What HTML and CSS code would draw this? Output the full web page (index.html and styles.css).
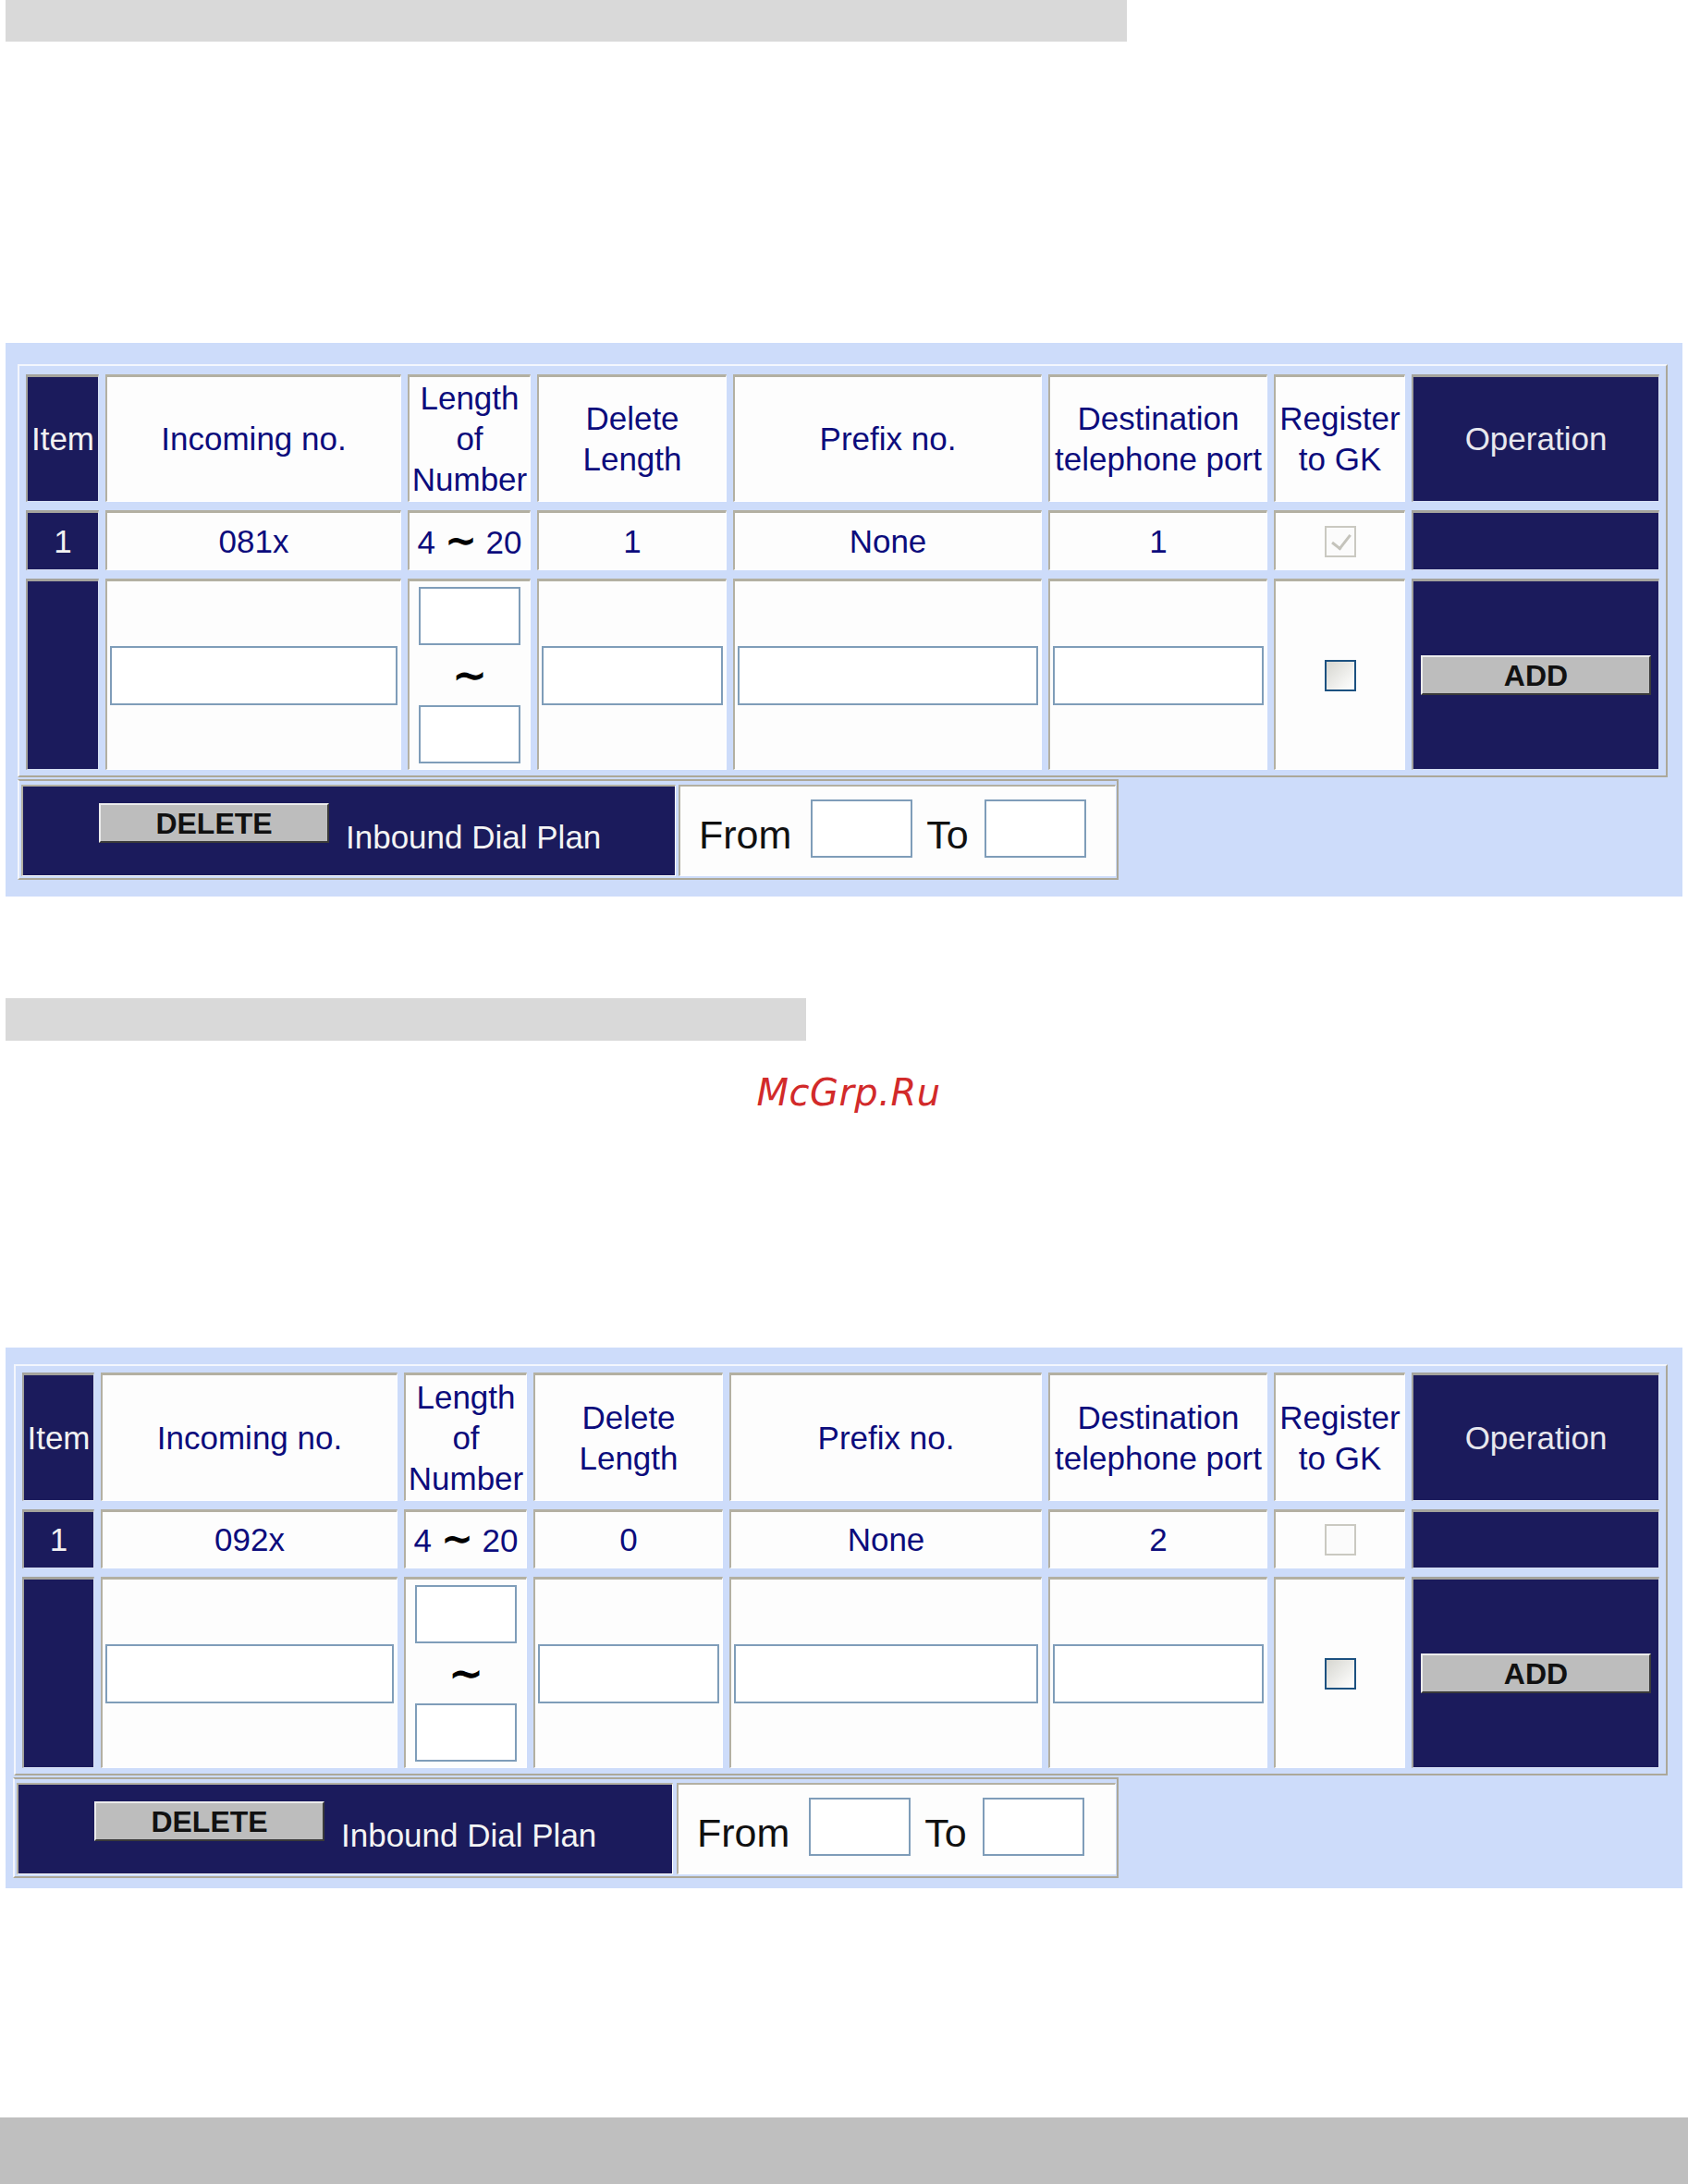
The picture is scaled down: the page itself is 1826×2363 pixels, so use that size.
FILE: index.html
```html
<!DOCTYPE html>
<html lang="en">
<head>
<meta charset="utf-8">
<title>Inbound Dial Plan</title>
<link rel="stylesheet" href="styles.css">
</head>
<body>
<div class="topbar"></div>

<section class="panel panel-1">
  <div class="grid grid-1">
    <div class="cell dark">Item</div>
    <div class="cell">Incoming no.</div>
    <div class="cell">Length<br>of<br>Number</div>
    <div class="cell">Delete<br>Length</div>
    <div class="cell">Prefix no.</div>
    <div class="cell">Destination<br>telephone port</div>
    <div class="cell">Register<br>to GK</div>
    <div class="cell dark op">Operation</div>

    <div class="cell dark">1</div>
    <div class="cell">081x</div>
    <div class="cell"><span class="range-txt">4 <span class="tl">∼</span> 20</span></div>
    <div class="cell">1</div>
    <div class="cell">None</div>
    <div class="cell">1</div>
    <div class="cell"><span class="chk chk-off chk-on"></span></div>
    <div class="cell dark"></div>

    <div class="cell dark"></div>
    <div class="cell input-cell"><input class="field" type="text"></div>
    <div class="cell len-cell"><input class="field-s" type="text"><span class="tilde">∼</span><input class="field-s" type="text"></div>
    <div class="cell input-cell"><input class="field" type="text"></div>
    <div class="cell input-cell"><input class="field" type="text"></div>
    <div class="cell input-cell"><input class="field" type="text"></div>
    <div class="cell"><span class="chk"></span></div>
    <div class="cell dark"><button class="btn" type="button">ADD</button></div>
  </div>
  <div class="foot foot-1">
    <div class="fcell del-cell del-1"><button class="btn" type="button">DELETE</button><span class="plan">Inbound Dial Plan</span></div>
    <div class="fcell range range-1"><span class="lbl lbl-from">From</span><input class="field-s" type="text"><span class="lbl lbl-to">To</span><input class="field-s" type="text"></div>
  </div>
</section>

<div class="bar2"></div>
<p class="mark">McGrp.Ru</p>

<section class="panel panel-2">
  <div class="grid grid-2">
    <div class="cell dark">Item</div>
    <div class="cell">Incoming no.</div>
    <div class="cell">Length<br>of<br>Number</div>
    <div class="cell">Delete<br>Length</div>
    <div class="cell">Prefix no.</div>
    <div class="cell">Destination<br>telephone port</div>
    <div class="cell">Register<br>to GK</div>
    <div class="cell dark op">Operation</div>

    <div class="cell dark">1</div>
    <div class="cell">092x</div>
    <div class="cell"><span class="range-txt">4 <span class="tl">∼</span> 20</span></div>
    <div class="cell">0</div>
    <div class="cell">None</div>
    <div class="cell">2</div>
    <div class="cell"><span class="chk chk-off"></span></div>
    <div class="cell dark"></div>

    <div class="cell dark"></div>
    <div class="cell input-cell"><input class="field" type="text"></div>
    <div class="cell len-cell"><input class="field-s" type="text"><span class="tilde">∼</span><input class="field-s" type="text"></div>
    <div class="cell input-cell"><input class="field" type="text"></div>
    <div class="cell input-cell"><input class="field" type="text"></div>
    <div class="cell input-cell"><input class="field" type="text"></div>
    <div class="cell"><span class="chk"></span></div>
    <div class="cell dark"><button class="btn" type="button">ADD</button></div>
  </div>
  <div class="foot foot-2">
    <div class="fcell del-cell del-2"><button class="btn" type="button">DELETE</button><span class="plan">Inbound Dial Plan</span></div>
    <div class="fcell range range-2"><span class="lbl lbl-from">From</span><input class="field-s" type="text"><span class="lbl lbl-to">To</span><input class="field-s" type="text"></div>
  </div>
</section>

<div class="bottombar"></div>
</body>
</html>
```
FILE: styles.css
```css
* { box-sizing: border-box; }

body {
  margin: 0;
  background: #ffffff;
  font-family: "Liberation Sans", Arial, sans-serif;
}

.topbar {
  margin-left: 6px;
  width: 1213px;
  height: 45px;
  background: #d9d9d9;
}

.panel {
  margin-left: 6px;
  width: 1814px;
  background: #cddcfa;
}
.panel-1 { margin-top: 326px; padding: 23px 0 18px 13px; }
.panel-2 { margin-top: 252px; padding: 18px 0 11px 8px; }

.grid {
  display: grid;
  width: max-content;
  border: 2px solid;
  border-color: #f3f6fd #aca899 #aca899 #f3f6fd;
  column-gap: 7px;
  row-gap: 9px;
}
.grid-1 {
  grid-template-columns: 79px 320px 133px 205px 334px 237px 142px 268px;
  grid-template-rows: 138px 65px 207px;
  padding: 9px 7px 6px 7px;
}
.grid-2 {
  margin-left: 1px;
  grid-template-columns: 78px 321px 133px 205px 338px 237px 142px 268px;
  grid-template-rows: 139px 64px 207px;
  padding: 7px 7px 6px 7px;
}

.cell {
  display: flex;
  align-items: center;
  justify-content: center;
  text-align: center;
  background: #fdfdfd;
  border-style: solid;
  border-width: 3px 1px 1px 2px;
  border-color: #b3b0a2 #ffffff #ffffff #b3b0a2;
  color: #0c0c7c;
  font-size: 35px;
  line-height: 44px;
  white-space: nowrap;
}
.cell.dark {
  background: #1b1b5c;
  color: #f2f2f2;
  border-color: #a4a39c #d9e1f3 #d9e1f3 #a4a39c;
}
.cell.op { color: #e8e8ee; }

.range-txt { white-space: pre; }

.tl {
  font-family: "DejaVu Sans", sans-serif;
  font-weight: bold;
  font-size: 42px;
  color: #000000;
}

.input-cell { padding: 0 3px 0 3px; }

.field {
  display: block;
  width: 100%;
  height: 64px;
  margin: 0;
  padding: 0;
  border: 2px solid #7f9db9;
  background: #ffffff;
  font-size: 20px;
  outline: none;
}

.field-s {
  display: block;
  width: 110px;
  height: 63px;
  margin: 0;
  padding: 0;
  border: 2px solid #7f9db9;
  background: #ffffff;
  font-size: 20px;
  outline: none;
  flex: none;
}

.len-cell { flex-direction: column; }
.tilde {
  height: 65px;
  line-height: 65px;
  font-family: "DejaVu Sans", sans-serif;
  font-weight: bold;
  font-size: 46px;
  color: #000000;
}

.chk {
  position: relative;
  display: block;
  width: 34px;
  height: 34px;
  border: 2px solid #1c5180;
  background: linear-gradient(135deg, #d6d6d0 0%, #f4f4f2 70%, #ffffff 100%);
}
.chk-off {
  border-color: #cac9c1;
  background: #fbfbfb;
}
.chk-on::after {
  content: "";
  position: absolute;
  left: 10px;
  top: 3px;
  width: 9px;
  height: 17px;
  border: solid #c4c3bb;
  border-width: 0 3px 3px 0;
  transform: rotate(38deg);
}

.btn {
  display: block;
  width: 249px;
  height: 43px;
  margin: 0;
  padding: 0;
  background: #bdbdbd;
  border: 2px solid;
  border-color: #ececec #3a3a3a #3a3a3a #ececec;
  color: #111111;
  font-family: "Liberation Sans", Arial, sans-serif;
  font-weight: bold;
  font-size: 32px;
  line-height: 1;
  flex: none;
}

.foot {
  display: flex;
  width: max-content;
  margin-top: 2px;
  border: 2px solid;
  border-color: #aca899 #aca899 #aca899 #f3f6fd;
  padding: 4px 1px 2px 2px;
}
.foot-1 { gap: 3px; }
.foot-2 { gap: 4px; }

.fcell {
  display: flex;
  align-items: flex-start;
  height: 99px;
  border-style: solid;
  border-width: 2px 1px 1px 2px;
  border-color: #b3b0a2 #ffffff #ffffff #b3b0a2;
}

.del-cell {
  background: #1b1b5c;
  padding: 18px 0 0 82px;
}
.del-1 { width: 708px; }
.del-2 { width: 710px; }

.plan {
  margin: 17px 0 0 18px;
  color: #f4f4f4;
  font-size: 35px;
  line-height: 40px;
  white-space: nowrap;
}

.range {
  background: #fdfdfd;
  padding: 14px 0 0 20px;
}
.range-1 { width: 473px; }
.range-2 { width: 475px; }

.lbl {
  margin-top: 13px;
  color: #111111;
  font-size: 43px;
  line-height: 50px;
}
.lbl-from { margin-right: 21px; }
.lbl-to { margin-left: 15px; margin-right: 17px; }

.bar2 {
  margin: 110px 0 0 6px;
  width: 866px;
  height: 46px;
  background: #d9d9d9;
}

.mark {
  margin: 32px 0 0 0;
  padding-left: 10px;
  text-align: center;
  font-family: "DejaVu Sans", sans-serif;
  font-style: italic;
  font-size: 40px;
  line-height: 48px;
  letter-spacing: 0.5px;
  color: #d22a2a;
}

.bottombar {
  margin-top: 248px;
  height: 72px;
  background: #bfbfbf;
}
```
